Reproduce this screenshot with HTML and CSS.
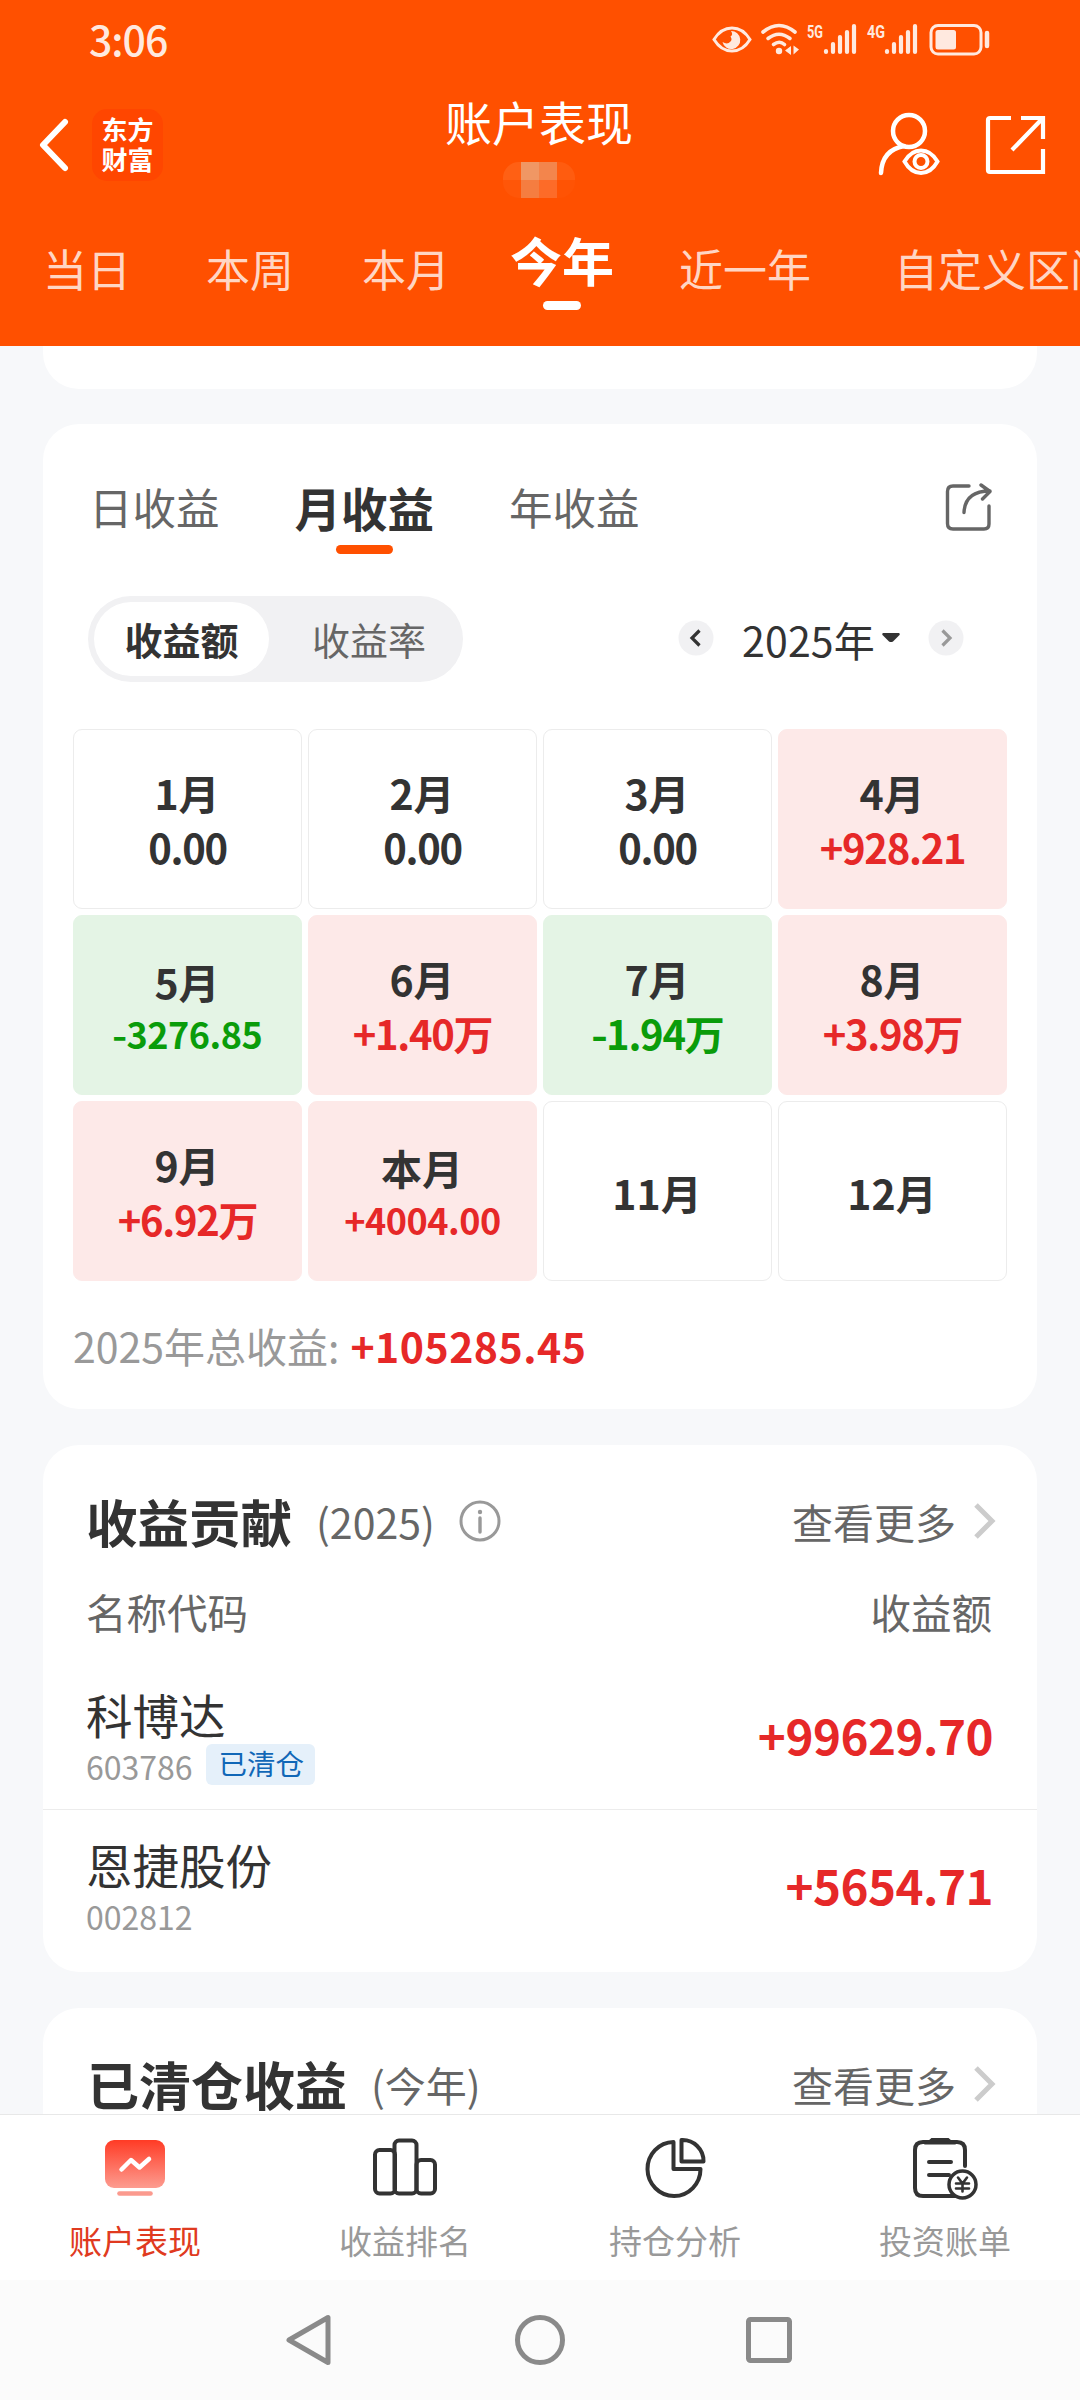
FILE: index.html
```html
<!DOCTYPE html>
<html lang="zh-CN">
<head>
  <meta charset="UTF-8">
  <meta name="viewport" content="width=device-width, initial-scale=1">
  <title>账户表现</title>
  <link rel="stylesheet" href="styles.css">
</head>
<body>

  <header class="header">
    <div class="status">
      <span class="time">3:06</span>
      <svg class="status-icons" width="280" height="60" viewBox="712 10 280 60" fill="none" stroke="#ffe9df">
        <!-- 护眼 -->
        <path d="M714 39.500Q721 28 732 28T750 39.500Q743 51 732 51T714 39.500Z" stroke-width="3"/>
        <path d="M731 31a9 9 0 1 1-8.500 11q5 3 8-.5q2-2 0-5q3-2 .5-5.500z" fill="#ffe9df" stroke="none"/>
        <!-- wifi -->
        <g stroke-width="3.600" stroke-linecap="round">
          <path d="M763 32q16-13 32 0"/>
          <path d="M768 38.500q11-8.500 22 0"/>
          <path d="M773.500 44.500q6-4.500 11 0"/>
        </g>
        <circle cx="779" cy="51" r="3.200" fill="#ffe9df" stroke="none"/>
        <path d="M785 50.500l6-4.500v9zM799 49.500l-5.500-4v9z" fill="#ffe9df" stroke="none"/>
        <!-- 信号 -->
        <g stroke-width="4.200" stroke-linecap="round">
          <path d="M826 51v1M833 44v8M840 37v15M847 32v20M854 26v26"/>
          <path d="M887 51v1M894 44v8M901 37v15M908 32v20M915 26v26"/>
        </g>
        <g class="net">
          <text x="807" y="37.500" textLength="16" lengthAdjust="spacingAndGlyphs">5G</text>
          <text x="867" y="37.500" textLength="18" lengthAdjust="spacingAndGlyphs">4G</text>
        </g>
        <!-- 电池 -->
        <rect x="931" y="25.500" width="50" height="28.500" rx="7" stroke-width="3"/>
        <rect x="935.500" y="30" width="20.500" height="19.500" rx="2.500" fill="#ffe9df" stroke="none"/>
        <path d="M987 33v13" stroke-width="4.500" stroke-linecap="round"/>
      </svg>
    </div>

    <div class="titlebar">
      <svg class="back" width="32" height="56" viewBox="0 0 32 56" fill="none" stroke="#fff" stroke-width="6" stroke-linecap="round" stroke-linejoin="round">
        <path d="M27 5L5 28l22 23"/>
      </svg>
      <div class="logo"><span>东方</span><span>财富</span></div>
      <div class="title">
        <h1>账户表现</h1>
        <div class="mosaic"><i></i><i></i><i></i><i></i><i></i><i></i><i></i><i></i></div>
      </div>
      <svg class="user" width="64" height="66" viewBox="0 0 64 66" fill="none" stroke="#fff" stroke-width="4.500" stroke-linecap="round">
        <circle cx="33" cy="19" r="16"/>
        <path d="M28 34Q6 38 5 61"/>
        <path d="M28.500 49.500Q35 38.500 45 38.500T61.500 49.500Q55 61 45 61T28.500 49.500Z" stroke-width="4"/>
        <circle cx="45" cy="49.500" r="6.500" stroke-width="4"/>
      </svg>
      <svg class="export" width="62" height="62" viewBox="0 0 62 62" fill="none" stroke="#fff" stroke-width="4.200">
        <path d="M27 4H6Q4 4 4 6v50q0 2 2 2h53V35"/>
        <path d="M37 4h22v21M58 5L28 36"/>
      </svg>
    </div>

    <nav class="ranges">
      <span>当日</span>
      <span>本周</span>
      <span>本月</span>
      <span class="active">今年</span>
      <span>近一年</span>
      <span>自定义区间</span>
    </nav>
  </header>

  <main class="content">
    <section class="card card-prev"></section>

    <section class="card calendar">
      <div class="tabs">
        <span>日收益</span>
        <span class="active">月收益</span>
        <span>年收益</span>
        <svg width="50" height="50" viewBox="0 0 50 50" fill="none" stroke="#666" stroke-width="3.400" stroke-linecap="round" stroke-linejoin="round">
          <path d="M25 4H9Q3.500 4 3.500 9.500v32Q3.500 47 9 47h31q5 0 5-5V24"/>
          <path d="M20 30.500Q21 9 46 9M37 3l9 6.500-7.500 7.500"/>
        </svg>
      </div>

      <div class="filter">
        <div class="segment">
          <span class="active">收益额</span>
          <span>收益率</span>
        </div>
        <div class="year">
          <svg width="36" height="36" viewBox="0 0 36 36" fill="none" stroke="#333" stroke-width="3.200">
            <circle cx="18" cy="18" r="17.500" fill="#f1f1f3" stroke="none"/>
            <path d="M21.500 10.500L14 18l7.500 7.500"/>
          </svg>
          <span>2025年</span>
          <svg class="caret" width="18" height="10" viewBox="0 0 18 10"><path d="M1 0h16q1.500 1 0 2.500L11 8.500q-2 1-4 0L1 2.500Q-.5 1 1 0z" fill="#333"/></svg>
          <svg width="36" height="36" viewBox="0 0 36 36" fill="none" stroke="#999" stroke-width="3.200">
            <circle cx="18" cy="18" r="17.500" fill="#f1f1f3" stroke="none"/>
            <path d="M14.500 10.500L22 18l-7.500 7.500"/>
          </svg>
        </div>
      </div>

      <div class="months">
        <div class="month"><b>1月</b><em>0.00</em></div>
        <div class="month"><b>2月</b><em>0.00</em></div>
        <div class="month"><b>3月</b><em>0.00</em></div>
        <div class="month up"><b>4月</b><em>+928.21</em></div>
        <div class="month down small"><b>5月</b><em><i class="minus">-</i>3276.85</em></div>
        <div class="month up"><b>6月</b><em>+1.40万</em></div>
        <div class="month down"><b>7月</b><em><i class="minus">-</i>1.94万</em></div>
        <div class="month up"><b>8月</b><em>+3.98万</em></div>
        <div class="month up"><b>9月</b><em>+6.92万</em></div>
        <div class="month up small"><b>本月</b><em>+4004.00</em></div>
        <div class="month"><b>11月</b></div>
        <div class="month"><b>12月</b></div>
      </div>

      <div class="total">2025年总收益:<strong>+105285.45</strong></div>
    </section>

    <section class="card contribution">
      <div class="card-head">
        <h2>收益贡献</h2>
        <span class="period digits">(2025)</span>
        <svg width="42" height="42" viewBox="0 0 42 42" fill="none" stroke="#999" stroke-width="3">
          <circle cx="21" cy="21" r="19"/>
          <path d="M21 18v14" stroke-width="3.400" stroke-linecap="round"/>
          <circle cx="21" cy="12" r="2.200" fill="#999" stroke="none"/>
        </svg>
        <span class="more">查看更多</span>
        <svg class="arrow" width="22" height="36" viewBox="0 0 22 36" fill="none" stroke="#ccc" stroke-width="5"><path d="M2 2l16 16L2 34"/></svg>
      </div>
      <div class="columns"><span>名称代码</span><span>收益额</span></div>
      <div class="stock">
        <div>
          <div class="name">科博达</div>
          <div class="code">603786<span class="badge">已清仓</span></div>
        </div>
        <strong>+99629.70</strong>
      </div>
      <div class="stock">
        <div>
          <div class="name">恩捷股份</div>
          <div class="code">002812</div>
        </div>
        <strong>+5654.71</strong>
      </div>
    </section>

    <section class="card cleared">
      <div class="card-head">
        <h2>已清仓收益</h2>
        <span class="period">(今年)</span>
        <span class="more">查看更多</span>
        <svg class="arrow" width="22" height="36" viewBox="0 0 22 36" fill="none" stroke="#ccc" stroke-width="5"><path d="M2 2l16 16L2 34"/></svg>
      </div>
    </section>
  </main>

  <footer class="tabbar">
    <div class="tab active">
      <svg width="66" height="66" viewBox="0 0 66 66" fill="none">
        <defs>
          <linearGradient id="red" x1="0" y1="0" x2="0" y2="1">
            <stop offset="0" stop-color="#ff3b25"/>
            <stop offset="1" stop-color="#fd9c90"/>
          </linearGradient>
        </defs>
        <rect x="3" y="4" width="60" height="48" rx="9" fill="url(#red)"/>
        <path d="M19.500 33.500L29 24l8.500 7.500L47 23" stroke="#fff" stroke-width="4.500" stroke-linecap="round" stroke-linejoin="round"/>
        <path d="M17.500 57.500h31" stroke="#fb9a8e" stroke-width="4.600" stroke-linecap="round"/>
      </svg>
      <span>账户表现</span>
    </div>
    <div class="tab">
      <svg width="66" height="66" viewBox="0 0 66 66" fill="none" stroke="#333" stroke-width="4">
        <rect x="3" y="14" width="20" height="43.500" rx="4.500"/>
        <rect x="22.500" y="4.500" width="22" height="53" rx="4.500"/>
        <rect x="44.500" y="24" width="18.500" height="33.500" rx="4.500"/>
      </svg>
      <span>收益排名</span>
    </div>
    <div class="tab">
      <svg width="66" height="66" viewBox="0 0 66 66" fill="none" stroke="#333" stroke-width="4" stroke-linejoin="round">
        <path d="M31.500 6v27H58.500A26.500 27 0 1 1 31.500 6z"/>
        <path d="M39.500 4v21.500H61.500A21 21 0 0 0 39.500 4z"/>
      </svg>
      <span>持仓分析</span>
    </div>
    <div class="tab">
      <svg width="66" height="66" viewBox="0 0 66 66" fill="none" stroke="#333" stroke-width="4" stroke-linecap="round">
        <path d="M53 30V14q0-8-8-8H11q-8 0-8 8v38q0 8 8 8h38"/>
        <path d="M20 3.500h16l4 3.500H16z" fill="#333" stroke-width="3"/>
        <path d="M17 26h22M17 39h20"/>
        <circle cx="50.500" cy="48.500" r="13.500" fill="#fff" stroke-width="3.500"/>
        <path d="M46 41.500l4.500 6 4.500-6M50.500 47.500v8M44 47.500h13M44 52.500h13" stroke-width="2.600"/>
      </svg>
      <span>投资账单</span>
    </div>
  </footer>

  <div class="sysnav">
    <svg width="50" height="56" viewBox="0 0 50 56"><path d="M4 28L43 5.500v45z"/></svg>
    <svg width="56" height="56" viewBox="0 0 56 56"><circle cx="28" cy="28" r="22.500"/></svg>
    <svg width="50" height="56" viewBox="0 0 50 56"><rect x="3.500" y="7.500" width="41" height="41" rx="2"/></svg>
  </div>

</body>
</html>
```
FILE: styles.css
```css
* {
  box-sizing: border-box;
}

body {
  margin: 0;
  width: 1080px;
  height: 2400px;
  display: flex;
  flex-direction: column;
  overflow: hidden;
  background: #f7f8fa;
  color: #333;
  font-family: "Noto Sans CJK SC", sans-serif;
}

h1, h2 {
  margin: 0;
}

em, i {
  font-style: normal;
}

svg {
  display: block;
  flex: none;
}

/* 顶部 */
.header {
  height: 346px;
  flex: none;
  background: #ff5000;
  color: #fff;
  overflow: hidden;
}

.status {
  height: 80px;
  padding: 0 88px 0 89px;
  display: flex;
  justify-content: space-between;
  align-items: center;
}

.time {
  font-size: 41px;
  font-weight: 500;
  line-height: 76px;
  padding-bottom: 4px;
  letter-spacing: -1px;
  color: #ffe9df;
}

.net {
  font-family: "Roboto", sans-serif;
  font-size: 19px;
  font-weight: 700;
  fill: #ffe9df;
  stroke: none;
}

.titlebar {
  height: 130px;
  padding: 0 34px 0 38px;
  display: flex;
  align-items: center;
}

.logo {
  width: 71px;
  height: 72px;
  margin-left: 22px;
  padding-top: 5px;
  border-radius: 15px;
  background: #ff4600;
  font-size: 26px;
  font-weight: 700;
  line-height: 30px;
  text-align: center;
}

.logo span {
  display: block;
}

.title {
  flex: 1;
  align-self: stretch;
  padding: 8px 0 0 39px;
  display: flex;
  flex-direction: column;
  align-items: center;
}

.title h1 {
  font-size: 47px;
  font-weight: 400;
  line-height: 66px;
}

.mosaic {
  display: grid;
  grid-template-columns: repeat(4, 18px);
  grid-auto-rows: 18px;
  margin-top: 8px;
  border-radius: 16px;
  overflow: hidden;
}

.mosaic i:nth-child(1) { background: #ff6014; }
.mosaic i:nth-child(2) { background: #f09764; }
.mosaic i:nth-child(3) { background: #f3854c; }
.mosaic i:nth-child(4) { background: #ff5c0f; }
.mosaic i:nth-child(5) { background: #ff5608; }
.mosaic i:nth-child(6) { background: #f57d40; }
.mosaic i:nth-child(7) { background: #fd6b28; }
.mosaic i:nth-child(8) { background: #ff5304; }

.export {
  margin-left: 44px;
}

.ranges {
  display: flex;
  height: 120px;
  padding-left: 43px;
  color: #ffd6c4;
  font-size: 44px;
  line-height: 117px;
  white-space: nowrap;
}

.ranges span {
  flex: none;
  margin-right: 75px;
}

.ranges span:nth-child(2) {
  margin-right: 68px;
}

.ranges span:nth-child(3) {
  margin-right: 60px;
}

.ranges span:nth-child(5) {
  margin-right: 83px;
}

.ranges .active {
  display: flex;
  flex-direction: column;
  align-items: center;
  margin-right: 65px;
  color: #fff;
  font-size: 52px;
  font-weight: 700;
  line-height: 99px;
}

.ranges .active::after {
  content: "";
  width: 38px;
  height: 9px;
  margin-top: -8px;
  border-radius: 5px;
  background: #fff;
}

/* 内容 */
.content {
  flex: 1;
  min-height: 0;
  overflow: hidden;
}

.card {
  margin: 0 43px 36px;
  border-radius: 36px;
  background: #fff;
}

.card-prev {
  height: 43px;
  margin-bottom: 35px;
  border-radius: 0 0 36px 36px;
}

.calendar {
  height: 985px;
  padding: 48px 30px 0;
}

.tabs {
  display: flex;
  align-items: flex-start;
  height: 124px;
  padding: 0 13px 0 16px;
  font-size: 43.500px;
  line-height: 70px;
  color: #666;
}

.tabs span {
  margin-right: 75px;
}

.tabs .active {
  display: flex;
  flex-direction: column;
  align-items: center;
  color: #333;
  font-size: 46.500px;
  font-weight: 700;
}

.tabs .active::after {
  content: "";
  width: 57px;
  height: 9px;
  margin-top: 3px;
  border-radius: 5px;
  background: #ff5000;
}

.tabs svg {
  margin: 10px 0 0 auto;
}

.filter {
  display: flex;
  justify-content: space-between;
  height: 133px;
  padding: 0 43px 0 15px;
}

.segment {
  display: flex;
  width: 375px;
  height: 86px;
  padding: 6px;
  border-radius: 43px;
  background: #f1f1f3;
  color: #666;
  font-size: 38px;
  line-height: 74px;
  text-align: center;
}

.segment span {
  flex: none;
  width: 175px;
}

.segment span + span {
  width: 200px;
}

.segment .active {
  border-radius: 37px;
  background: #fff;
  color: #333;
  font-weight: 700;
}

.year {
  display: flex;
  align-items: center;
  height: 84px;
  font-size: 41px;
}

.year span {
  margin: 2px 0 0 28px;
  letter-spacing: 0.200px;
}

.year .caret {
  margin: 0 28px 0 7px;
}

.months {
  display: grid;
  grid-template-columns: repeat(4, 1fr);
  grid-auto-rows: 180px;
  gap: 6px;
}

.month {
  display: flex;
  flex-direction: column;
  align-items: center;
  justify-content: center;
  padding-top: 2px;
  border: 1px solid #ececec;
  border-radius: 9px;
  line-height: 55px;
}

.month b {
  font-size: 41px;
  margin-right: 1px;
}

.month em {
  font-size: 40px;
  font-weight: 700;
  letter-spacing: -1.300px;
}

.month.small em {
  font-size: 36px;
  line-height: 49px;
  letter-spacing: -0.500px;
}

.up {
  border-color: #fde9e8;
  background: #fde9e8;
}

.down {
  border-color: #e4f4e5;
  background: #e4f4e5;
}

.up em {
  color: #e62828;
}

.down em {
  color: #0a9c0a;
}

.minus {
  display: inline-block;
  margin-right: 1px;
  transform: scaleX(1.150);
}

.total {
  color: #999;
  font-size: 41px;
  line-height: 128px;
}

.total strong {
  margin-left: 11px;
  color: #e62828;
  letter-spacing: 0.500px;
}

/* 收益贡献 */
.contribution {
  height: 527px;
  padding-top: 40px;
}

.card-head {
  display: flex;
  align-items: center;
  height: 72px;
  padding: 0 41px 0 43px;
}

.card-head h2 {
  font-size: 51.500px;
  line-height: 72px;
}

.period {
  margin: 0 24px 0 24px;
  color: #666;
  font-size: 41px;
}

.more {
  margin-left: auto;
  color: #666;
  font-size: 41px;
}

.arrow {
  margin-left: 18px;
}

.columns {
  display: flex;
  justify-content: space-between;
  height: 97px;
  padding: 19px 45px 0 43px;
  color: #666;
  font-size: 40.500px;
  line-height: 72px;
}

.stock {
  display: flex;
  justify-content: space-between;
  height: 155px;
  padding: 29px 44px 0 43px;
}

.stock + .stock {
  padding-top: 23px;
  border-top: 1px solid #ececec;
}

.name {
  font-size: 46.500px;
  line-height: 62px;
}

.code {
  display: flex;
  align-items: center;
  height: 42px;
  color: #999;
  font-size: 32px;
  line-height: 42px;
}

.badge {
  height: 41px;
  margin: -3px 0 0 13px;
  padding: 0 11px 0 13px;
  border-radius: 6px;
  background: #e5f0fa;
  color: #1167b7;
  font-size: 28.500px;
  line-height: 38px;
}

.stock strong {
  margin-top: 12px;
  color: #e62828;
  font-size: 47.500px;
  line-height: 80px;
  letter-spacing: -0.500px;
}

.cleared {
  height: 200px;
  padding-top: 40px;
}

.cleared h2 {
  margin-left: 1px;
  font-size: 52px;
}

/* 底部标签 */
.tabbar {
  display: flex;
  flex: none;
  height: 166px;
  border-top: 1px solid #e8e8e8;
  background: #fff;
}

.tab {
  flex: 1;
  display: flex;
  flex-direction: column;
  align-items: center;
  padding-top: 21px;
  color: #999;
  font-size: 33px;
  line-height: 48px;
}

.tab span {
  margin-top: 14px;
}

.tab.active {
  color: #e03a20;
}

.sysnav {
  display: flex;
  flex: none;
  justify-content: center;
  align-items: center;
  gap: 177px;
  height: 120px;
  background: #fbfbfb;
  fill: none;
  stroke: #8a8a8a;
  stroke-width: 5;
  stroke-linejoin: round;
}
```
